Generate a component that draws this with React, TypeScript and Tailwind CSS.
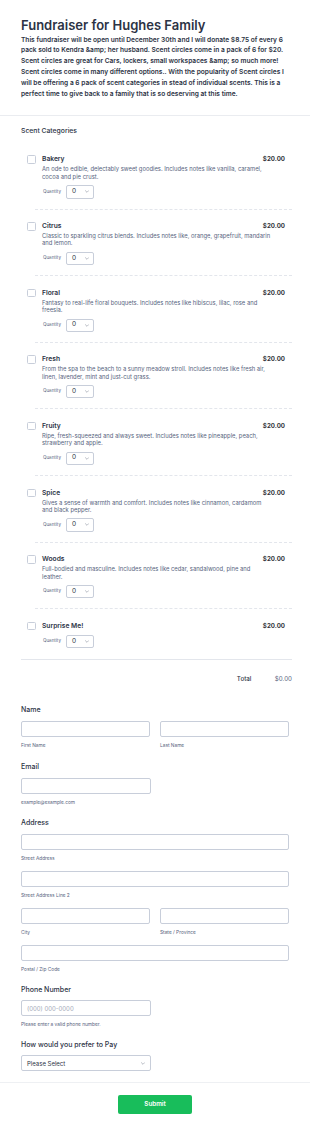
import React from "react";

type Product = { name: string; desc?: string };

const products: Product[] = [
  { name: "Bakery", desc: "An ode to edible, delectably sweet goodies. Includes notes like vanilla, caramel, cocoa and pie crust." },
  { name: "Citrus", desc: "Classic to sparkling citrus blends. Includes notes like, orange, grapefruit, mandarin and lemon." },
  { name: "Floral", desc: "Fantasy to real-life floral bouquets. Includes notes like hibiscus, lilac, rose and freesia." },
  { name: "Fresh", desc: "From the spa to the beach to a sunny meadow stroll. Includes notes like fresh air, linen, lavender, mint and just-cut grass." },
  { name: "Fruity", desc: "Ripe, fresh-squeezed and always sweet. Includes notes like pineapple, peach, strawberry and apple." },
  { name: "Spice", desc: "Gives a sense of warmth and comfort. Includes notes like cinnamon, cardamom and black pepper." },
  { name: "Woods", desc: "Full-bodied and masculine. Includes notes like cedar, sandalwood, pine and\nleather." },
  { name: "Surprise Me!" },
];

const Chevron = ({ className }: { className?: string }) => (
  <svg viewBox="0 0 10 6" className={className} fill="none">
    <path d="M1 1l4 4 4-4" stroke="#6b7385" strokeWidth="1.2" strokeLinecap="round" strokeLinejoin="round" />
  </svg>
);

const Input = ({ className = "", placeholder }: { className?: string; placeholder?: string }) => (
  <div className={`h-[16px] rounded-[2px] border border-[#c8ceda] bg-white px-[5px] flex items-center ${className}`}>
    {placeholder && <span className="text-[6px] text-[#a3a9b8]">{placeholder}</span>}
  </div>
);

const Sub = ({ children }: { children: React.ReactNode }) => (
  <div className="mt-[4px] text-[4.8px] leading-[8px] text-[#57647e]">{children}</div>
);

const Label = ({ children }: { children: React.ReactNode }) => (
  <div className="text-[7px] leading-[10px] font-medium text-[#2c3345]">{children}</div>
);

const ProductItem = ({ p, last }: { p: Product; last: boolean }) => (
  <div className={`${last ? "pb-[11px]" : "pb-[10px] border-b border-dashed border-[#e3e6ec]"} pt-[12.5px] ml-[14px]`}>
    <div className="flex -ml-[8px] pr-[7px]">
      <div className="w-[8.5px] h-[8.5px] rounded-[1.5px] border border-[#c8ceda] bg-white shrink-0" />
      <div className="ml-[6.5px] flex-1">
        <div className="flex justify-between items-start">
          <div className="text-[6.7px] leading-[8px] font-semibold text-[#2c3345]">{p.name}</div>
          <div className="text-[6.2px] leading-[8px] font-bold text-[#33363d]">$20.00</div>
        </div>
        {p.desc && (
          <div className="mt-[2px] max-w-[231px] whitespace-pre-line text-[5.85px] leading-[7.4px] text-[#57647e]">{p.desc}</div>
        )}
        <div className="mt-[5px] flex items-center">
          <span className="text-[4.5px] text-[#57647e] w-[24px] pl-[1px]">Quantity</span>
          <div className="w-[27.5px] h-[13.3px] rounded-[2px] border border-[#c8ceda] bg-white flex items-center justify-between pl-[5px] pr-[4px]">
            <span className="text-[6.5px] text-[#2c3345]">0</span>
            <Chevron className="w-[4px] h-[3px]" />
          </div>
        </div>
      </div>
    </div>
  </div>
);

export default function App() {
  return (
    <div className="w-[310px] bg-white font-['Inter',sans-serif] text-[#2c3345]">
      {/* Header */}
      <div className="px-[21px] pt-[18px] pb-[15.6px] border-b border-[#eaecf0]">
        <h1 className="text-[13px] leading-[15px] font-semibold text-[#2c3345]">Fundraiser for Hughes Family</h1>
        <p className="mt-[1.6px] text-[6.6px] leading-[10.8px] font-semibold text-[#2c3345]">
          This fundraiser will be open until December 30th and I will donate $8.75 of every 6 pack sold to Kendra &amp;amp; her husband. Scent circles come in a pack of 6 for $20. Scent circles are great for Cars, lockers, small workspaces &amp;amp; so much more! Scent circles come in many different options.. With the popularity of Scent circles I will be offering a 6 pack of scent categories in stead of individual scents. This is a perfect time to give back to a family that is so deserving at this time.
        </p>
      </div>

      {/* Products */}
      <div className="px-[18px] pt-[10px]">
        <div className="pl-[3px] text-[6.8px] leading-[10px] font-medium text-[#2c3345]">Scent Categories</div>
        <div className="pl-[3px] pt-[7px]">
          {products.map((p, i) => (
            <ProductItem key={p.name} p={p} last={i === products.length - 1} />
          ))}
          <div className="border-t border-[#e3e6ec]" />
          <div className="flex justify-end items-center h-[38px] text-[6.2px]">
            <span className="font-medium text-[#2c3345] w-[38px]">Total</span>
            <span className="text-[#57647e]">$0.00</span>
          </div>
        </div>
      </div>

      {/* Contact fields */}
      <div className="px-[21px] pt-[7px] flex flex-col">
        <Label>Name</Label>
        <div className="mt-[6px] flex gap-[10px]">
          <div className="flex-1">
            <Input />
            <Sub>First Name</Sub>
          </div>
          <div className="flex-1">
            <Input />
            <Sub>Last Name</Sub>
          </div>
        </div>

        <div className="mt-[12.5px]"><Label>Email</Label></div>
        <div className="mt-[6px] w-[130px]">
          <Input />
          <Sub>example@example.com</Sub>
        </div>

        <div className="mt-[12.5px]"><Label>Address</Label></div>
        <div className="mt-[6px]">
          <Input />
          <Sub>Street Address</Sub>
        </div>
        <div className="mt-[9px]">
          <Input />
          <Sub>Street Address Line 2</Sub>
        </div>
        <div className="mt-[9px] flex gap-[10px]">
          <div className="flex-1">
            <Input />
            <Sub>City</Sub>
          </div>
          <div className="flex-1">
            <Input />
            <Sub>State / Province</Sub>
          </div>
        </div>
        <div className="mt-[9px]">
          <Input />
          <Sub>Postal / Zip Code</Sub>
        </div>

        <div className="mt-[12px]"><Label>Phone Number</Label></div>
        <div className="mt-[5px] w-[130px]">
          <Input placeholder="(000) 000-0000" />
          <Sub>Please enter a valid phone number.</Sub>
        </div>

        <div className="mt-[12px]"><Label>How would you prefer to Pay</Label></div>
        <div className="mt-[5px] w-[130px] h-[16px] rounded-[2px] border border-[#c8ceda] bg-white flex items-center justify-between pl-[5px] pr-[5px]">
          <span className="text-[6px] text-[#2c3345]">Please Select</span>
          <Chevron className="w-[4px] h-[3px]" />
        </div>
      </div>

      {/* Submit */}
      <div className="mt-[11px] border-t border-[#eef0f3] pt-[12px] pb-[17px] flex justify-center">
        <button className="w-[74px] h-[19px] rounded-[2px] bg-[#18bd5b] text-white text-[6.3px] font-semibold">Submit</button>
      </div>
    </div>
  );
}
